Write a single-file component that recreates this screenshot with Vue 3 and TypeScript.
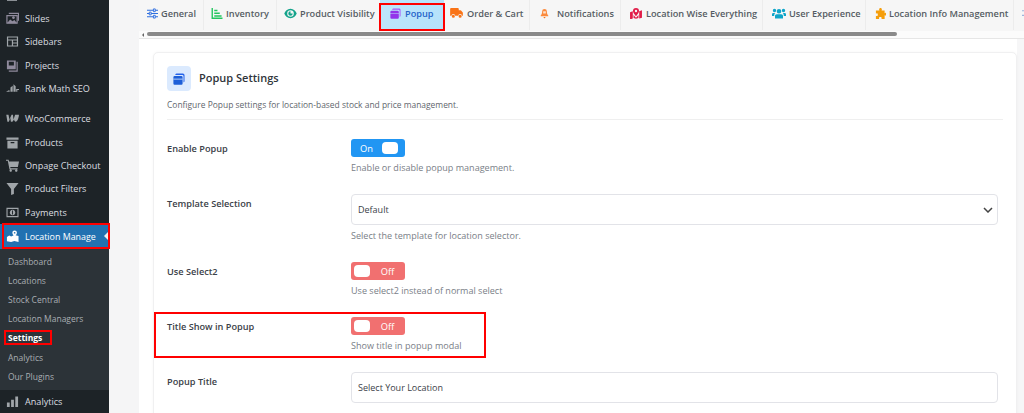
<script setup lang="ts">
interface Shape { d: string; fill?: string; stroke?: string; sw?: number }
interface Tab { label: string; vb: string; w: number; h: number; shapes: Shape[]; width: number; pl: number; gap: number; active?: boolean; plain?: boolean }

const tabs: Tab[] = [
  { label: 'General', vb: '0 0 12 12', w: 11, h: 11, width: 65, pl: 8, gap: 3, shapes: [
    { d: 'M0 2.500h12M0 6h12M0 9.500h12', stroke: '#2f6fe0', sw: 1.200 },
    { d: 'M7 1h2v3H7zM2.500 4.500h2v3h-2zM7 8h2v3H7z', fill: '#f6f6f6', stroke: '#2f6fe0', sw: 1 } ] },
  { label: 'Inventory', vb: '0 0 12 12', w: 12, h: 11, width: 73, pl: 7, gap: 3, shapes: [
    { d: 'M.8 0v11.200H12', stroke: '#22c55e', sw: 1.500 },
    { d: 'M3 2h3.500v1.600H3zM3 5h6v1.600H3zM3 8h8v1.600H3z', fill: '#22c55e' } ] },
  { label: 'Product Visibility', vb: '0 0 14 12', w: 13, h: 11, width: 103, pl: 7, gap: 3, plain: true, shapes: [
    { d: 'M7 .8C3.600.8 1.200 3.400.2 6c1 2.600 3.400 5.200 6.800 5.200S12.800 8.600 13.800 6C12.800 3.400 10.400.8 7 .8zm0 8.800A3.600 3.600 0 1 1 7 2.400a3.600 3.600 0 0 1 0 7.200z', fill: '#14a38b' },
    { d: 'M7 3.600A2.400 2.400 0 1 0 9.400 6H7z', fill: '#14a38b' } ] },
  { label: 'Popup', vb: '0 0 12 12', w: 11, h: 11, width: 64, pl: 10, gap: 4, active: true, plain: true, shapes: [
    { d: 'M3.500.5h6.400A1.600 1.600 0 0 1 11.500 2v6.400a1.400 1.400 0 0 1-1 1.300V3.200A1.200 1.200 0 0 0 9.300 2H2.300A1.400 1.400 0 0 1 3.500.5z', fill: '#a855f7' },
    { d: 'M1.700 3h6.600a1.300 1.300 0 0 1 1.300 1.300v1.400H.4V4.300A1.300 1.300 0 0 1 1.700 3zM.4 6.200h9.200v4.300a1.200 1.200 0 0 1-1.300 1.200H1.700a1.200 1.200 0 0 1-1.300-1.200z', fill: '#9333ea' } ] },
  { label: 'Order & Cart', vb: '0 0 14 11', w: 13, h: 10, width: 86, pl: 6, gap: 4, shapes: [
    { d: 'M1 0h7.500a1 1 0 0 1 1 1v1.500h1.800a1 1 0 0 1 .7.300l1.700 1.800a1 1 0 0 1 .300.700V8.500h-1a2 2 0 0 0-4 0H5.500a2 2 0 0 0-4 0H0V1a1 1 0 0 1 1-1z', fill: '#f97316' },
    { d: 'M3.500 7.300a1.700 1.700 0 1 0 0 3.400 1.700 1.700 0 0 0 0-3.400zM11 7.300a1.700 1.700 0 1 0 0 3.400 1.700 1.700 0 0 0 0-3.400z', fill: '#f97316' } ] },
  { label: 'Notifications', vb: '0 0 10 12', w: 9, h: 11, width: 91, pl: 10, gap: 8, shapes: [
    { d: 'M5 1a2.600 2.600 0 0 0-2.600 2.600c0 2.600-.8 3.800-1.600 4.600v.8h8.400v-.8c-.8-.8-1.600-2-1.600-4.600A2.600 2.600 0 0 0 5 1z', fill: '#fb8a3c' },
    { d: 'M3.700 9.800h2.600L5 11.500z', fill: '#f97316' },
    { d: 'M3.500 3.500h3v2.500h-3z', fill: '#fde2cc' } ] },
  { label: 'Location Wise Everything', vb: '0 0 13 12', w: 12, h: 11, width: 142, pl: 9, gap: 4, shapes: [
    { d: 'M0 4.500l3-1v8l-3 1zM10 3.500l3-1v8l-3 1zM3.800 7.500l2.700 3 2.700-3v3.500l-2.700.8-2.700-.8z', fill: '#e11d48' },
    { d: 'M6.500 0a3.300 3.300 0 0 0-3.300 3.300C3.200 5.500 6.500 9 6.500 9s3.300-3.500 3.300-5.700A3.300 3.300 0 0 0 6.500 0zm0 4.600a1.300 1.300 0 1 1 0-2.600 1.300 1.300 0 0 1 0 2.600z', fill: '#e11d48' } ] },
  { label: 'User Experience', vb: '0 0 14 11', w: 14, h: 11, width: 103, pl: 9, gap: 3, shapes: [
    { d: 'M2.500 .8a1.700 1.700 0 1 0 0 3.400 1.700 1.700 0 0 0 0-3.400zM11.500 .8a1.700 1.700 0 1 0 0 3.400 1.700 1.700 0 0 0 0-3.400zM7 1a2.300 2.300 0 1 0 0 4.600A2.300 2.300 0 0 0 7 1z', fill: '#0ea5c9' },
    { d: 'M0 8V6.200C0 5.300.7 4.900 1.500 4.900h1.700c-.6.700-1 1.500-1 3.100zM14 8V6.200c0-.9-.7-1.300-1.500-1.300h-1.700c.6.700 1 1.500 1 3.100zM4.700 6.300h4.600c.9 0 1.700.7 1.700 1.700v2.500H3V8c0-1 .8-1.700 1.700-1.700z', fill: '#0ea5c9' } ] },
  { label: 'Location Info Management', vb: '0 0 12 12', w: 11, h: 11, width: 148, pl: 9, gap: 3, shapes: [
    { d: 'M4.500 1.500C4.500.6 5.200 0 6 0s1.500.6 1.500 1.500c0 .5-.3.8-.3 1.100h3.300v3c.3 0 .6-.3 1-.3.8 0 1.100.8 1.100 1.500s-.3 1.500-1.100 1.500c-.4 0-.7-.3-1-.3V12H7c0-.3.3-.6.300-1 0-.8-.8-1.100-1.500-1.100S4.300 10.200 4.300 11c0 .4.300.7.300 1H1V8.500c.3 0 .6.300 1 .3C2.800 8.800 3.100 8 3.100 7.300S2.800 5.800 2 5.800c-.4 0-.7.300-1 .300V2.600h3.800c0-.3-.3-.6-.3-1.100z', fill: '#f59e0b' } ] }
]

interface Item { label: string; shapes: Shape[] }
const g = '#a0a5a9'
const topItems: Item[] = [
  { label: 'Slides', shapes: [{ d: 'M1 4h11v8H1zM3 1.500h10.500v8', fill: 'none', stroke: '#8f8a9c', sw: 1.300 }, { d: 'M1 12l3.500-4 2.500 2 2-1.500L12 12zM8 4.500a1.500 1.500 0 1 0 .1 0z', fill: '#8f8a9c' }] },
  { label: 'Sidebars', shapes: [{ d: 'M1 1.500h12v11H1zm1.300 1.300v2h9.400v-2zm0 3.200v5.200h4v-5.200zm5.300 0v2h4.100V6zm0 3.200v2h4.100v-2z', fill: g }] },
  { label: 'Projects', shapes: [{ d: 'M1 1.500h9.500v9.500H1zM3 3h5.500v4H3z', fill: '#8f8a9c' }, { d: 'M12 3v10H3', fill: 'none', stroke: '#8f8a9c', sw: 1.300 }] },
  { label: 'Rank Math SEO', shapes: [{ d: 'M0 10.500l3.500-2 .6 2zM4.800 10.500V6l2.400-2v6.500zM8 10.500V2.500l2.400 2v6zM11 10.500V7.500h3.500v1.200H12.200v1.800z', fill: g }] }
]
const midItems: Item[] = [
  { label: 'WooCommerce', shapes: [{ d: 'M.3 3h2.400l1 5 2.300-5h1.500l.6 5L9.800 3h4.100l-.1 1.700C13.300 7 12.300 10.500 10.500 10.500c-1 0-1.600-.8-1.800-2.300L6.900 10.500H5.300L4.600 6.500 3 10.500H1.500z', fill: g }] },
  { label: 'Products', shapes: [{ d: 'M.5 1.500h13v2.600H.5zM1.500 5h11v8.500h-11zM5 6.500v1.200h4V6.500z', fill: g }] },
  { label: 'Onpage Checkout', shapes: [{ d: 'M0 .8h2.800l.5 2H14l-1.200 5.700H4.600l.3 1.500h7.600v1.200H3.800L1.900 2H0zM5 11.200a1.300 1.300 0 1 0 .1 0zM11 11.200a1.300 1.300 0 1 0 .1 0z', fill: g }] },
  { label: 'Product Filters', shapes: [{ d: 'M.5 1h13L8.500 7.500V13l-3 1V7.500z', fill: g }] },
  { label: 'Payments', shapes: [{ d: 'M.5 2h13v10H.5zm1.200 1.200v7.600h10.600V3.200zM7 4a3 3 0 1 0 .1 0z', fill: g }, { d: 'M6.500 4.800h1v4.400h-1z', fill: '#1d2327' }] }
]
const subItems = ['Dashboard', 'Locations', 'Stock Central', 'Location Managers', 'Settings', 'Analytics', 'Our Plugins']
const barsPath = 'M1 8h3v5H1zM5.500 5h3v8h-3zM10 1.500h3V13h-3z'
const pin: Shape[] = [{ d: 'M1 7.500l2.500-1.500 2 1L9 5.500 13.500 6.500v6.500L9 11.800 5.500 13 1 12z', fill: '#fff' }, { d: 'M9.300 0.500a2.500 2.500 0 0 0-2.500 2.500c0 1.700 2.500 4.300 2.500 4.300s2.500-2.600 2.500-4.300a2.500 2.500 0 0 0-2.500-2.500z', fill: '#fff' }]

interface Row { label: string; kind: 'toggle' | 'select' | 'input'; on?: boolean; value?: string; desc?: string }
const rows: Row[] = [
  { label: 'Enable Popup', kind: 'toggle', on: true, desc: 'Enable or disable popup management.' },
  { label: 'Template Selection', kind: 'select', value: 'Default', desc: 'Select the template for location selector.' },
  { label: 'Use Select2', kind: 'toggle', on: false, desc: 'Use select2 instead of normal select' },
  { label: 'Title Show in Popup', kind: 'toggle', on: false, desc: 'Show title in popup modal' },
  { label: 'Popup Title', kind: 'input', value: 'Select Your Location' }
]
</script>

<template>
  <div class="page">
    <aside class="side">
      <div class="clip"></div>
      <div v-for="it in topItems" :key="it.label" class="item">
        <svg class="ico" viewBox="0 0 14 14"><path v-for="(s, i) in it.shapes" :key="i" :d="s.d" :fill="s.fill ?? 'none'" :stroke="s.stroke" :stroke-width="s.sw" fill-rule="evenodd" /></svg>
        <span>{{ it.label }}</span>
      </div>
      <div class="sep"></div>
      <div v-for="it in midItems" :key="it.label" class="item">
        <svg class="ico" viewBox="0 0 14 14"><path v-for="(s, i) in it.shapes" :key="i" :d="s.d" :fill="s.fill ?? 'none'" :stroke="s.stroke" :stroke-width="s.sw" fill-rule="evenodd" /></svg>
        <span>{{ it.label }}</span>
      </div>
      <div class="item current">
        <svg class="ico" viewBox="0 0 14 14"><path v-for="(s, i) in pin" :key="i" :d="s.d" :fill="s.fill" /><circle cx="9.300" cy="3" r=".9" fill="#2271b1" /></svg>
        <span>Location Manage</span>
        <i class="notch"></i>
        <b class="mark mark-loc"></b>
      </div>
      <div class="sub">
        <div v-for="s in subItems" :key="s" class="subitem" :class="{ strong: s === 'Settings' }">
          {{ s }}
          <b v-if="s === 'Settings'" class="mark mark-set"></b>
        </div>
      </div>
      <div class="item">
        <svg class="ico" viewBox="0 0 14 14"><path :d="barsPath" :fill="g" /></svg>
        <span>Analytics</span>
      </div>
    </aside>

    <div class="gutter"></div>

    <main class="main">
      <nav class="tabs">
        <div v-for="t in tabs" :key="t.label" class="tab" :class="{ active: t.active, plain: t.plain }" :style="{ width: t.width + 'px', paddingLeft: t.pl + 'px', gap: t.gap + 'px' }">
          <svg :width="t.w" :height="t.h" :viewBox="t.vb" class="tabico"><path v-for="(s, i) in t.shapes" :key="i" :d="s.d" :fill="s.fill ?? 'none'" :stroke="s.stroke" :stroke-width="s.sw" fill-rule="evenodd" /></svg>
          <span>{{ t.label }}</span>
          <b v-if="t.active" class="mark mark-tab"></b>
        </div>
        <svg class="more" width="11" height="11" viewBox="0 0 12 12"><path d="M0 3h12M0 8h12" stroke="#9db4dc" stroke-width="1.200" /></svg>
      </nav>
      <div class="scroll">
        <i class="arrow"></i>
        <div class="thumb"></div>
      </div>
      <div class="content">
        <section class="card">
          <header class="head">
            <div class="headico">
              <svg width="12" height="12" viewBox="0 0 12 12"><path d="M3.500.5h6.400A1.600 1.600 0 0 1 11.500 2v6.400l-1 1.200V3.200A1.200 1.200 0 0 0 9.300 2H2.300A1.400 1.400 0 0 1 3.500.5z" fill="#2563eb" /><path d="M1.700 3h6.600a1.300 1.300 0 0 1 1.300 1.300v6.200a1.200 1.200 0 0 1-1.300 1.200H1.700a1.200 1.200 0 0 1-1.300-1.200V4.300A1.300 1.300 0 0 1 1.700 3z" fill="#1d5fd8" /><path d="M.4 5.700h9.200v.8H.4z" fill="#dbeafe" /></svg>
            </div>
            <h2>Popup Settings</h2>
          </header>
          <p class="intro">Configure Popup settings for location-based stock and price management.</p>
          <div class="rule"></div>
          <div class="rows">
            <div v-for="r in rows" :key="r.label" class="row">
              <label>{{ r.label }}</label>
              <div class="ctl">
                <div v-if="r.kind === 'toggle'" class="toggle" :class="r.on ? 'on' : 'off'">
                  <span class="knob"></span>
                  <span class="tt">{{ r.on ? 'On' : 'Off' }}</span>
                </div>
                <div v-else class="field">
                  <span>{{ r.value }}</span>
                  <svg v-if="r.kind === 'select'" width="10" height="6" viewBox="0 0 10 6"><path d="M1 1l4 4 4-4" fill="none" stroke="#444" stroke-width="1.500" /></svg>
                </div>
                <p v-if="r.desc" class="desc">{{ r.desc }}</p>
              </div>
              <b v-if="r.label === 'Title Show in Popup'" class="mark mark-row"></b>
            </div>
          </div>
        </section>
      </div>
    </main>
  </div>
</template>

<style>
html, body { margin: 0; background: #f6f6f7; overflow: hidden; }
</style>

<style scoped>
.page { display: flex; width: 1024px; height: 413px; overflow: hidden; font-family: "Open Sans", "Noto Sans", sans-serif; }
.side { width: 109px; flex: none; background: #1d2327; color: #dcdee0; font-size: 9.100px; padding-top: 7px; box-sizing: border-box; position: relative; }
.clip { position: absolute; left: 7px; top: 0; width: 10px; height: 1px; background: #8a8f94; }
.item { height: 23.300px; display: flex; align-items: center; gap: 6px; padding-left: 6px; position: relative; white-space: nowrap; }
.ico { width: 13px; height: 13px; flex: none; }
.sep { height: 7px; }
.current { background: #2271b1; color: #fff; height: 25px; font-size: 8.900px; }
.notch { position: absolute; right: 0; top: 7px; border: 5.500px solid transparent; border-left: 0; border-right-color: #f0f0f1; }
.sub { background: #2c3338; color: #a9aeb3; font-size: 8.500px; height: 141px; box-sizing: border-box; padding-top: 3px; }
.subitem { height: 19.200px; line-height: 19.200px; padding-left: 8px; position: relative; white-space: nowrap; }
.strong { color: #fff; font-weight: 700; }
.gutter { width: 30px; flex: none; background: #f5f5f6; }
.main { width: 885px; flex: none; position: relative; background: #f6f6f7; }
.tabs { height: 31px; display: flex; background: #f6f6f6; overflow: hidden; white-space: nowrap; }
.tab { display: flex; align-items: center; height: 30px; padding-bottom: 4px; color: #555c63; font-size: 9.200px; font-weight: 600; border-right: 1px solid #ececec; position: relative; flex: none; box-sizing: border-box; }
.tab.plain { border-right: 0; }
.tab.active { background: linear-gradient(90deg, #bde5fb, #b5e2fb); color: #2563c9; }
.tabico { flex: none; }
.more { flex: none; margin: 8px 0 0 8px; }
.scroll { background: #fbfbfb; border-bottom: 1px solid #e6e6e6; position: relative; box-sizing: border-box; height: 8px; }
.arrow { position: absolute; left: 3px; top: 2px; border: 2px solid transparent; border-left: 0; border-right-color: #666; }
.thumb { position: absolute; left: 8px; width: 750px; top: 1px; height: 4px; border-radius: 2px; background: #8a8a8a; }
.content { padding: 13px 0 0 14px; width: 878px; box-sizing: border-box; background: #fff; }
.card { box-sizing: border-box; background: #fff; border: 1px solid #f0f0f1; border-radius: 5px; padding: 13px 13px 0; box-shadow: 0 0 3px rgba(0, 0, 0, .04); height: 380px; }
.head { display: flex; align-items: center; gap: 8px; height: 25px; }
.headico { width: 24px; height: 25px; border-radius: 4px; background: #dbeafe; display: flex; align-items: center; justify-content: center; }
h2 { margin: -2px 0 0; font-size: 11px; font-weight: 600; color: #2f343a; }
.intro { margin: 6px 0 0; padding-top: 1px; font-size: 8.450px; line-height: 14px; color: #5f666d; }
.rule { height: 1px; background: #efefef; margin: 7px 0 19px; }
.rows { display: flex; flex-direction: column; gap: 19px; }
.row { display: flex; position: relative; }
label { width: 184px; flex: none; font-size: 9.200px; line-height: 19px; font-weight: 600; color: #3b4148; }
.ctl { width: 647px; flex: none; }
.toggle { width: 54px; height: 18px; border-radius: 3px; display: flex; align-items: center; box-sizing: border-box; font-size: 9.300px; color: #fff; }
.toggle.on { background: #2196f3; flex-direction: row-reverse; padding-right: 7px; }
.toggle.off { background: #f17070; padding-left: 3px; }
.knob { width: 16px; height: 12px; background: #fff; border-radius: 4px; flex: none; }
.tt { flex: 1; text-align: center; }
.field { height: 31px; border: 1px solid #e2e3e8; border-radius: 4px; display: flex; align-items: center; justify-content: space-between; box-sizing: border-box; padding: 0 4px 0 6px; font-size: 9px; color: #3b4148; }
.desc { margin: 4px 0 0; font-size: 9.050px; line-height: 14px; color: #7a8087; }
.mark { position: absolute; border: 2px solid #f00; pointer-events: none; box-sizing: border-box; z-index: 3; }
.mark-loc { left: 2px; top: -1px; width: 108px; height: 26px; }
.mark-set { left: 4px; top: 2px; width: 48px; height: 15px; }
.mark-tab { left: -1px; top: 3px; width: 66px; height: 28px; }
.mark-row { left: -13px; top: -5px; width: 332px; height: 46px; }
</style>
